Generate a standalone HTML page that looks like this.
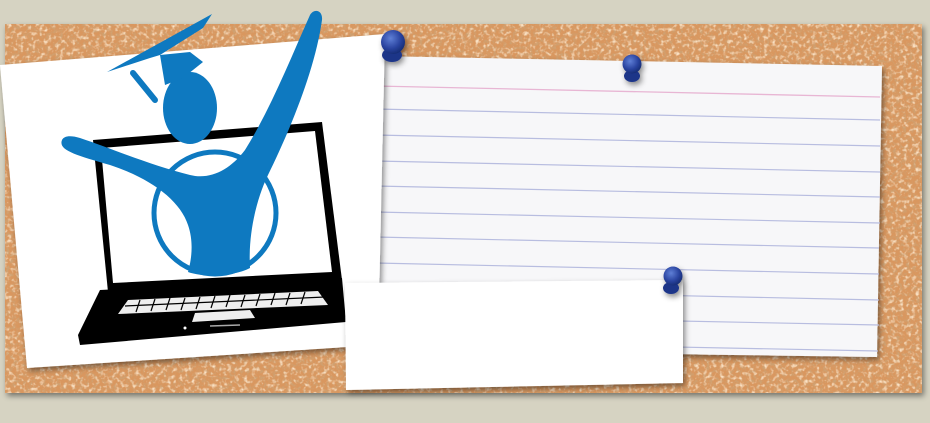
<!DOCTYPE html>
<html><head><style>
html,body{margin:0;padding:0;width:930px;height:423px;overflow:hidden;background:#d6d3c2}
</style></head><body>
<svg width="930" height="423" viewBox="0 0 930 423" xmlns="http://www.w3.org/2000/svg">
<defs>
<filter id="cork" x="0" y="0" width="100%" height="100%">
<feTurbulence type="fractalNoise" baseFrequency="0.3" numOctaves="3" seed="4"/>
<feColorMatrix values="0 0 0 0 0.62  0 0 0 0 0.36  0 0 0 0 0.17  3 0 0 0 -1.35"/>
</filter>
<filter id="cork2" x="0" y="0" width="100%" height="100%">
<feTurbulence type="fractalNoise" baseFrequency="0.25" numOctaves="2" seed="9"/>
<feColorMatrix values="0 0 0 0 0.95  0 0 0 0 0.75  0 0 0 0 0.55  0 3 0 0 -1.5"/>
</filter>
<filter id="sh" x="-10%" y="-10%" width="120%" height="130%"><feDropShadow dx="2" dy="3" stdDeviation="3" flood-opacity="0.45"/></filter>
<radialGradient id="pin" cx="0.4" cy="0.35" r="0.7"><stop offset="0" stop-color="#5f7fd6"/><stop offset="0.6" stop-color="#2a44a0"/><stop offset="1" stop-color="#142a70"/></radialGradient>
</defs>
<rect width="930" height="423" fill="#d6d3c2"/>
<rect x="5" y="24" width="917" height="369" fill="#d9975e" filter="url(#sh)"/>
<rect x="5" y="24" width="917" height="369" filter="url(#cork)"/>
<rect x="5" y="24" width="917" height="369" filter="url(#cork2)"/>
<!-- lined card -->
<g filter="url(#sh)"><polygon points="375,56 882,66 877,357 372,350" fill="#f7f7f9"/></g>
<line x1="376" y1="86" x2="880" y2="97" stroke="#e8b6d4" stroke-width="1.3"/>
<g stroke="#b8bde0" stroke-width="1.2">
<line x1="376" y1="109" x2="880" y2="120"/>
<line x1="376" y1="135" x2="880" y2="146"/>
<line x1="376" y1="161" x2="880" y2="172"/>
<line x1="376" y1="186" x2="880" y2="197"/>
<line x1="375" y1="212" x2="880" y2="223"/>
<line x1="375" y1="237" x2="879" y2="248"/>
<line x1="375" y1="263" x2="879" y2="274"/>
<line x1="375" y1="289" x2="879" y2="300"/>
<line x1="375" y1="315" x2="879" y2="325"/>
<line x1="375" y1="341" x2="878" y2="351"/>
</g>
<!-- left card -->
<g filter="url(#sh)"><polygon points="0,65 385,34 378,345 27,368" fill="#ffffff"/></g>
<!-- laptop -->
<polygon points="93,140 322,122 342,280 108,292" fill="#000"/>
<polygon points="101,148 315,131 332,272 113,283" fill="#fff"/>
<polygon points="100,290 342,278 346,322 80,345 78,335" fill="#000"/>
<polygon points="128,300 318,291 328,305 118,314" fill="#eee"/>
<polygon points="195,313 250,310 255,318 192,322" fill="#eee"/>
<g stroke="#000" stroke-width="1.2">
<line x1="140" y1="300" x2="136" y2="312"/><line x1="155" y1="299" x2="151" y2="311"/><line x1="170" y1="298" x2="166" y2="310"/><line x1="185" y1="298" x2="181" y2="310"/><line x1="200" y1="297" x2="196" y2="309"/><line x1="215" y1="296" x2="211" y2="308"/><line x1="230" y1="295" x2="226" y2="307"/><line x1="245" y1="295" x2="241" y2="307"/><line x1="260" y1="294" x2="256" y2="306"/><line x1="275" y1="293" x2="271" y2="305"/><line x1="290" y1="293" x2="286" y2="305"/><line x1="305" y1="292" x2="301" y2="304"/>
<line x1="125" y1="306" x2="325" y2="297"/>
</g>
<circle cx="185" cy="328" r="1.5" fill="#fff"/>
<line x1="210" y1="326" x2="240" y2="325" stroke="#aaa" stroke-width="1.5"/>
<!-- figure -->
<circle cx="215" cy="213" r="61" fill="none" stroke="#0e79c0" stroke-width="5"/>
<ellipse cx="190" cy="108" rx="27" ry="36" fill="#0e79c0"/>
<path d="M62,140 C58,150 75,155 110,165 C150,178 180,200 188,225 C195,245 190,265 188,272 C205,278 235,276 250,268 C248,235 256,200 268,175 C290,130 315,70 322,20 C323,10 314,8 310,15 C290,60 270,110 245,150 C230,170 210,180 190,175 C150,165 110,148 80,138 C70,135 64,136 62,140 Z" fill="#0e79c0"/>
<polygon points="107,72 212,14 203,28 160,55 150,58" fill="#0e79c0"/>
<polygon points="160,55 190,52 203,62 183,78 165,85" fill="#0e79c0"/>
<line x1="133" y1="73" x2="155" y2="100" stroke="#0e79c0" stroke-width="6" stroke-linecap="round"/>
<!-- bottom card -->
<g filter="url(#sh)"><polygon points="345,283 683,280 683,383 346,390" fill="#ffffff"/></g>
<!-- pins -->
<g filter="url(#sh)">
<ellipse cx="392" cy="55" rx="10" ry="7" fill="#1d3488"/><circle cx="393" cy="42" r="12" fill="url(#pin)"/>
<ellipse cx="632" cy="76" rx="8" ry="6" fill="#1d3488"/><circle cx="632" cy="64" r="9.5" fill="url(#pin)"/>
<ellipse cx="671" cy="288" rx="8" ry="6" fill="#1d3488"/><circle cx="673" cy="276" r="9.5" fill="url(#pin)"/>
</g>
</svg>
</body></html>
